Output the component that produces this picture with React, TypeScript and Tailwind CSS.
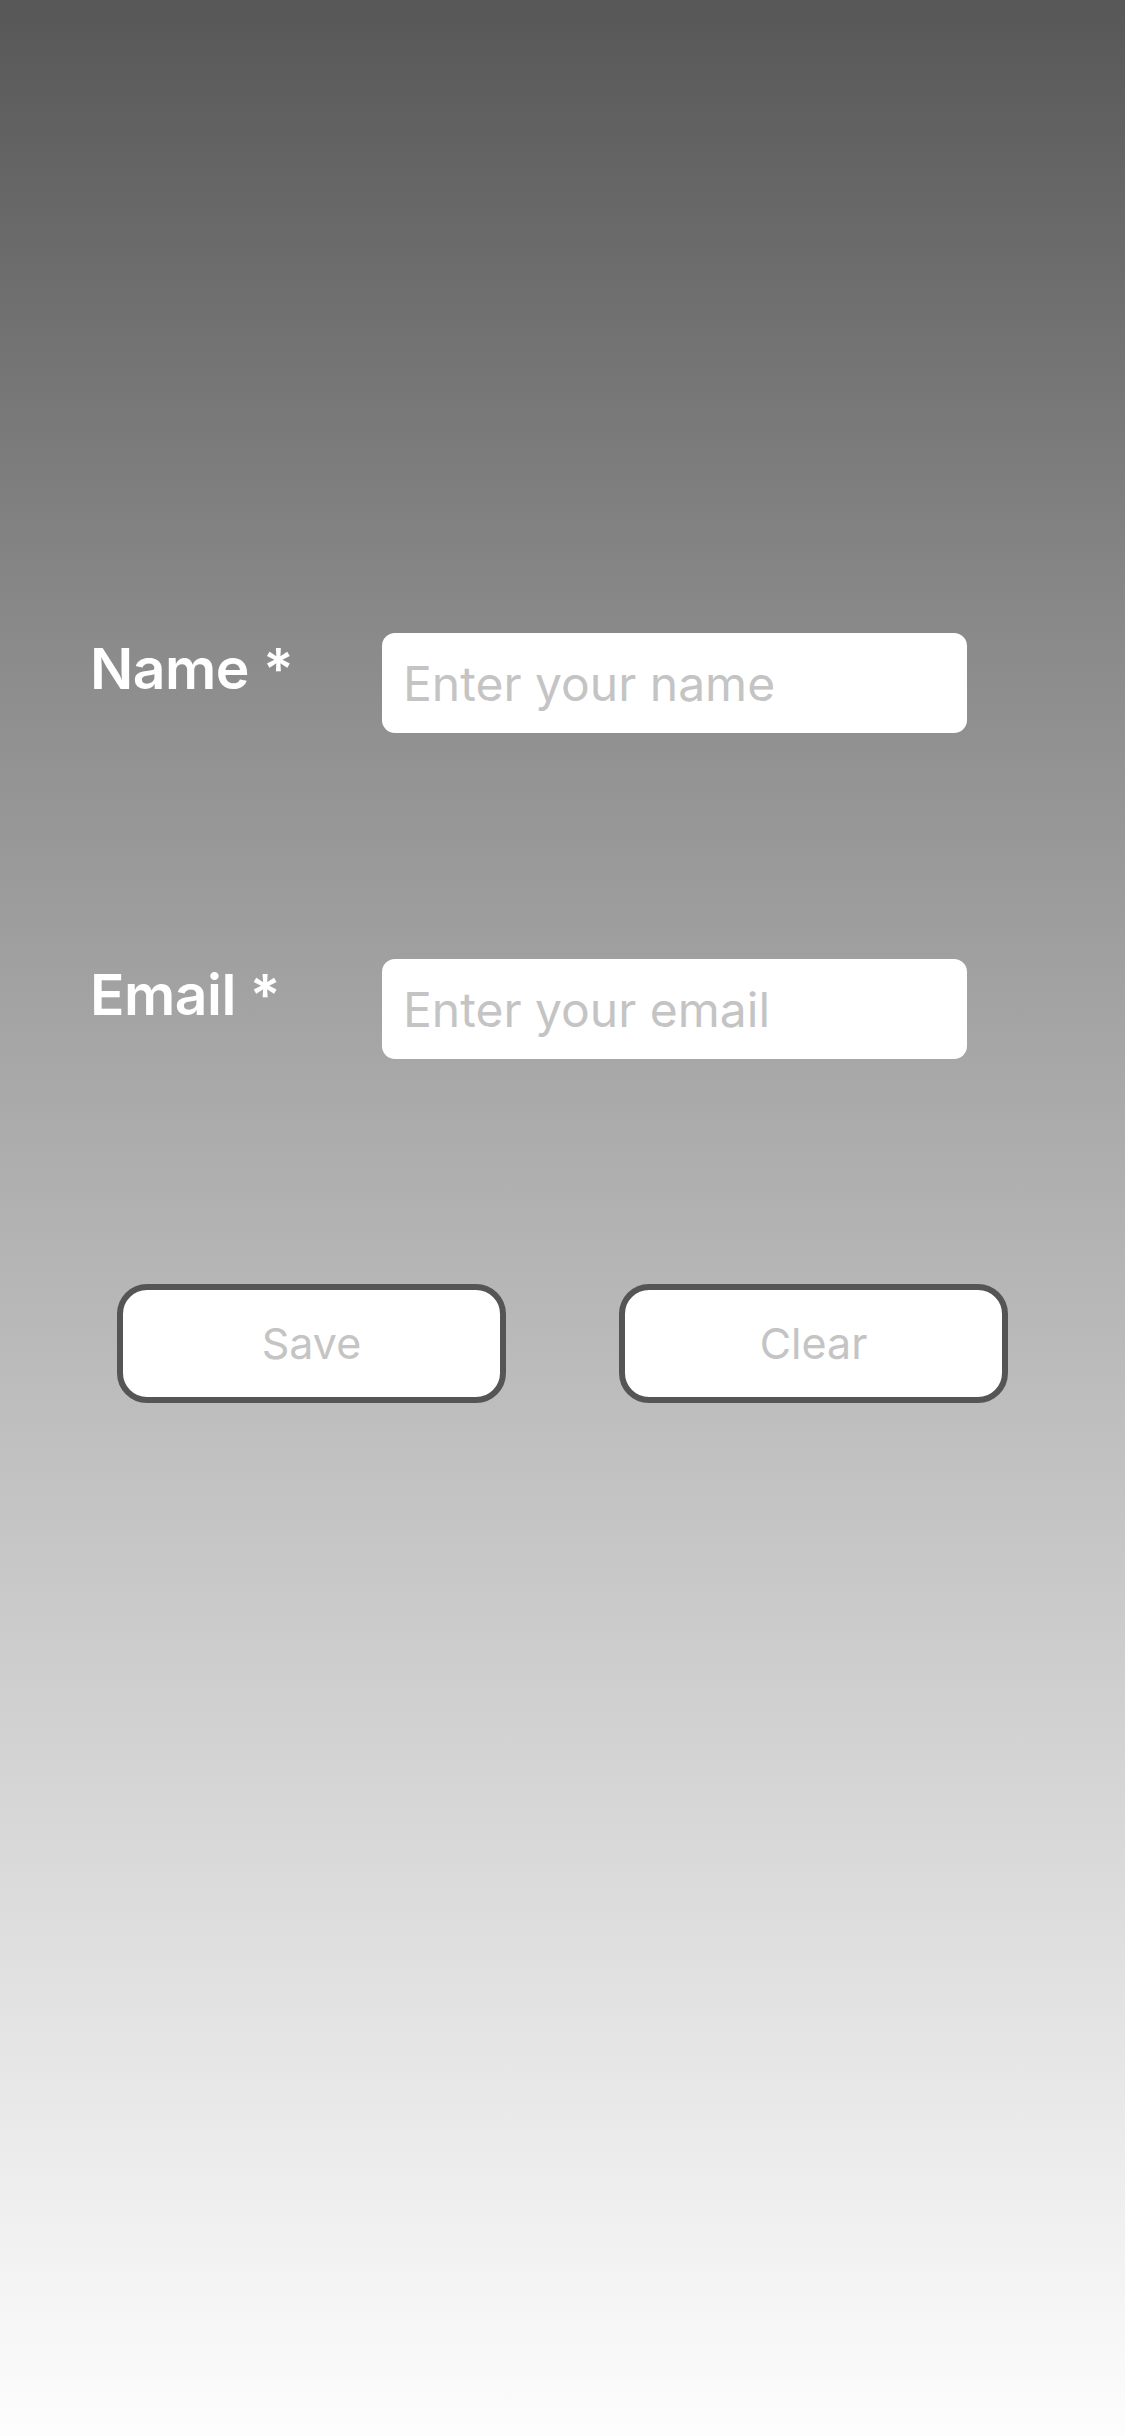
import React from "react";

export default function App() {
  return (
    <div
      className="min-h-[2436px] w-full bg-[linear-gradient(to_bottom,#575757_0%,#888888_25%,#b5b5b5_52%,#fdfdfd_100%)]"
      style={{ fontFamily: "Inter, 'Noto Sans', sans-serif" }}
    >
      <div className="flex flex-col pt-[633px]">
        <div className="flex items-start pl-[90px]">
          <label className="w-[292px] text-[57px] font-semibold leading-[72px] tracking-[-0.5px] text-white">Name *</label>
          <input
            className="h-[100px] w-[585px] rounded-[13px] bg-white px-[21px] text-[48px] text-black outline-none placeholder:text-[#c4c4c4]"
            placeholder="Enter your name"
          />
        </div>
        <div className="mt-[226px] flex items-start pl-[90px]">
          <label className="w-[292px] text-[57px] font-semibold leading-[72px] tracking-[-0.5px] text-white">Email *</label>
          <input
            className="h-[100px] w-[585px] rounded-[13px] bg-white px-[21px] text-[48px] text-black outline-none placeholder:text-[#c4c4c4]"
            placeholder="Enter your email"
          />
        </div>
        <div className="mt-[225px] flex gap-[113px] px-[117px]">
          <button className="flex h-[119px] flex-1 items-center justify-center rounded-[30px] border-[6px] border-[#555555] bg-white text-[43px] text-[#c4c4c4]">
            Save
          </button>
          <button className="flex h-[119px] flex-1 items-center justify-center rounded-[30px] border-[6px] border-[#555555] bg-white text-[43px] text-[#c4c4c4]">
            Clear
          </button>
        </div>
      </div>
    </div>
  );
}
